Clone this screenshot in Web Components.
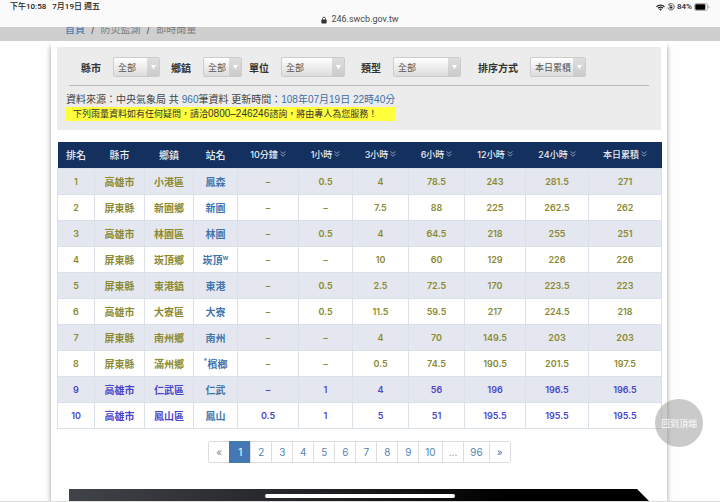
<!DOCTYPE html>
<html lang="zh-Hant">
<head>
<meta charset="utf-8">
<meta name="viewport" content="width=device-width, initial-scale=1">
<title>即時雨量</title>
<style>
  body {
    margin: 0;
    background: #fefefe;
    color: #444;
    font-family: Inter, "Noto Sans CJK TC", sans-serif;
    font-size: 9px;
    overflow: hidden;
  }
</style>
</head>
<body>
<rain-page>
  <status-bar slot="top" time="下午10:58" date="7月19日 週五" host="246.swcb.gov.tw" battery="84%"></status-bar>
  <bread-crumb slot="top" items="首頁,防災監測,即時雨量"></bread-crumb>

  <filter-panel>
    <filter-select slot="filters" label="縣市" value="全部" style="--select-width: 47px"></filter-select>
    <filter-select slot="filters" label="鄉鎮" value="全部" style="--select-width: 39px"></filter-select>
    <filter-select slot="filters" label="單位" value="全部" style="--select-width: 64px"></filter-select>
    <filter-select slot="filters" label="類型" value="全部" style="--select-width: 68px"></filter-select>
    <filter-select slot="filters" label="排序方式" value="本日累積" style="--select-width: 56px"></filter-select>
  </filter-panel>
  <rain-table></rain-table>
  <page-nav current="1" pages="1,2,3,4,5,6,7,8,9,10,...,96"></page-nav>
  <page-footer></page-footer>
</rain-page>
<back-to-top>回到頂端</back-to-top>
<home-indicator></home-indicator>

<script>
class RainPage extends HTMLElement {
  connectedCallback() {
    const shadow = this.attachShadow({ mode: 'open' });

    shadow.innerHTML = `
      <style>
        :host { display: block; }

        header {
          position: relative;
          z-index: 1;
        }

        .wrap {
          padding: 0 53px 0 51px;
          border-bottom: 1px solid #ddd;
          overflow: hidden;
        }

        main {
          display: flex;
          flex-direction: column;
          padding: 6px 6px 0;
          gap: 12px;
          background: #fff;
          box-shadow: 0 5px 5px rgba(0, 0, 0, 0.4);
        }
      </style>

      <header><slot name="top"></slot></header>
      <div class="wrap">
        <main><slot></slot></main>
      </div>
    `;
  }
}

class StatusBar extends HTMLElement {
  connectedCallback() {
    const shadow = this.attachShadow({ mode: 'open' });

    shadow.innerHTML = `
      <style>
        :host {
          display: block;
          background: #fafafa;
          color: #222;
          font-family: Roboto, "Noto Sans CJK TC", sans-serif;
          font-weight: 500;
        }

        .row {
          display: flex;
          align-items: center;
          height: 14px;
          padding: 0 10px;
          font-size: 8px;
          line-height: 14px;
        }

        .left { display: flex; gap: 6px; }

        .right {
          display: flex;
          align-items: center;
          gap: 2px;
          margin-left: auto;
        }

        .address {
          display: flex;
          align-items: center;
          justify-content: center;
          gap: 4px;
          height: 11px;
          padding-bottom: 2px;
          color: #4a4a4a;
          font-size: 9px;
          font-weight: 400;
          line-height: 11px;
        }

        svg { display: block; }
      </style>

      <div class="row">
        <div class="left">
          <span>${this.getAttribute('time')}</span>
          <span>${this.getAttribute('date')}</span>
        </div>
        <div class="right">
          <svg width="9" height="7" viewBox="0 0 18 14" fill="none" stroke="#222" stroke-width="2.6">
            <path d="M1 5.4a11.4 11.4 0 0 1 16 0M4 8.6a7.2 7.2 0 0 1 10 0"/>
            <path d="M9 13.4 6.2 10.6a4 4 0 0 1 5.6 0z" fill="#222" stroke="none"/>
          </svg>
          <svg width="8" height="8" viewBox="0 0 16 16" fill="none" stroke="#222" stroke-width="1.4">
            <path d="M3.4 3.2A6.4 6.4 0 1 1 1.7 8.8"/>
            <path d="M5 1.8 3 3.6l2.4 1.8"/>
            <path d="M6.2 7.6V6.4a1.8 1.8 0 0 1 3.6 0v1.2"/>
            <rect x="5.2" y="7.4" width="5.6" height="3.8" rx=".6" fill="#222" stroke="none"/>
          </svg>
          <span>${this.getAttribute('battery')}</span>
          <svg width="16" height="8" viewBox="0 0 32 16">
            <rect x="1" y="1" width="26" height="14" rx="4" fill="none" stroke="#999" stroke-width="1.6"/>
            <rect x="2.6" y="2.6" width="20" height="10.8" rx="2" fill="#000"/>
            <path d="M29 5.6q2 .8 2 2.4t-2 2.4z" fill="#999"/>
          </svg>
        </div>
      </div>
      <div class="address">
        <svg width="6" height="8" viewBox="0 0 12 16">
          <path d="M3 8V5.4a3 3 0 0 1 6 0V8" fill="none" stroke="#444" stroke-width="1.8"/>
          <rect x=".8" y="7" width="10.4" height="8" rx="1.4" fill="#333"/>
        </svg>
        <span>${this.getAttribute('host')}</span>
      </div>
    `;
  }
}

class BreadCrumb extends HTMLElement {
  connectedCallback() {
    const shadow = this.attachShadow({ mode: 'open' });
    const items = this.getAttribute('items').split(',');

    shadow.innerHTML = `
      <style>
        :host {
          display: block;
          height: 14px;
          overflow: hidden;
          background: #cfcfcf;
        }

        /* Scrolled halfway under the address bar */
        ol {
          display: flex;
          margin: -5px 0 0;
          padding: 0 65px;
          list-style: none;
          color: #7b7b7b;
          font-size: 10px;
          line-height: 14px;
        }

        li + li::before {
          content: "/";
          padding: 0 6px;
          color: #555;
        }

        a {
          color: #4a7fb5;
          font-weight: 500;
          text-decoration: none;
        }
      </style>

      <ol>
        ${items.map((item, i) => `<li>${i ? item : `<a href="#">${item}</a>`}</li>`).join('')}
      </ol>
    `;
  }
}

class FilterPanel extends HTMLElement {
  connectedCallback() {
    const shadow = this.attachShadow({ mode: 'open' });

    shadow.innerHTML = `
      <style>
        :host {
          display: block;
          padding: 10px 0 9px;
          background: #ececec;
        }

        .filters {
          display: grid;
          grid-template-columns: 90fr 78fr 112fr 117fr 183fr;
          padding-left: 24px;
        }

        hr {
          height: 1px;
          margin: 8px 12px 7px;
          border: 0;
          background: #b9b9b9;
        }

        p {
          display: flex;
          margin: 0 9px;
          font-family: "Liberation Sans", "Noto Sans CJK TC", sans-serif;
          font-size: 10px;
          line-height: 14px;
          white-space: pre;
        }

        .source { margin-right: 3px; }

        b {
          color: #3d6ea8;
          font-weight: 400;
        }

        mark {
          padding: 0 18px 0 7px;
          background: #ffff3c;
          color: #333;
          font-size: 9px;
          line-height: 13px;
        }

        .phone { font-size: 10px; }
      </style>

      <div class="filters"><slot name="filters"></slot></div>
      <hr>
      <p><span class="source">資料來源：中央氣象局 共</span><span><b>960</b>筆資料 更新時間：</span><b>108年07月19日 22時40分</b></p>
      <p><mark>下列雨量資料如有任何疑問，請洽<span class="phone">0800–246246</span>諮詢，將由專人為您服務！</mark></p>
    `;
  }
}

class FilterSelect extends HTMLElement {
  connectedCallback() {
    const shadow = this.attachShadow({ mode: 'open' });

    shadow.innerHTML = `
      <style>
        :host {
          display: flex;
          align-items: center;
          gap: 12px;
        }

        label {
          color: #333;
          font-size: 10px;
          font-weight: 700;
          white-space: nowrap;
        }

        .box {
          position: relative;
          width: var(--select-width);
        }

        select {
          display: block;
          box-sizing: border-box;
          width: 100%;
          height: 20px;
          padding: 0 13px 0 4px;
          appearance: none;
          border: 1px solid #ccc;
          border-radius: 2px;
          background: linear-gradient(#fff, #dcdcdc);
          color: #555;
          font: inherit;
        }

        .arrow {
          position: absolute;
          inset: 1px 1px 1px auto;
          display: grid;
          place-items: center;
          width: 12px;
          background: linear-gradient(#dedede, #cbcbcb);
          pointer-events: none;
        }
      </style>

      <label for="field">${this.getAttribute('label')}</label>
      <div class="box">
        <select id="field"><option>${this.getAttribute('value')}</option></select>
        <span class="arrow">
          <svg width="5" height="5" viewBox="0 0 6 6"><path d="M0 0h6L3 5z" fill="#fff"/></svg>
        </span>
      </div>
    `;
  }
}

class SortButton extends HTMLElement {
  connectedCallback() {
    const shadow = this.attachShadow({ mode: 'open' });

    shadow.innerHTML = `
      <style>
        :host { display: inline-block; }

        button {
          display: flex;
          align-items: center;
          gap: 2px;
          padding: 0;
          border: 0;
          background: none;
          color: inherit;
          font: inherit;
          line-height: inherit;
          white-space: nowrap;
        }

        svg { margin-bottom: 2px; }
      </style>

      <button type="button">
        <slot></slot>
        <svg width="6" height="6" viewBox="0 0 12 12" fill="none" stroke="#a9b8d2" stroke-width="1.5">
          <path d="M1 1l5 4 5-4M1 6.4l5 4 5-4"/>
        </svg>
      </button>
    `;
  }
}

const WIDTHS = [37, 50, 49, 44, 61, 54, 56, 56, 61, 63, 73];
const TEXT_HEADS = ['排名', '縣市', '鄉鎮', '站名'];
const SORT_HEADS = ['10分鐘', '1小時', '3小時', '6小時', '12小時', '24小時', '本日累積'];

const ROWS = [
  ['高雄市', '小港區', '鳳森', '–', '0.5', '4', '78.5', '243', '281.5', '271'],
  ['屏東縣', '新園鄉', '新園', '–', '–', '7.5', '88', '225', '262.5', '262'],
  ['高雄市', '林園區', '林園', '–', '0.5', '4', '64.5', '218', '255', '251'],
  ['屏東縣', '崁頂鄉', '崁頂<sup>w</sup>', '–', '–', '10', '60', '129', '226', '226'],
  ['屏東縣', '東港鎮', '東港', '–', '0.5', '2.5', '72.5', '170', '223.5', '223'],
  ['高雄市', '大寮區', '大寮', '–', '0.5', '11.5', '59.5', '217', '224.5', '218'],
  ['屏東縣', '南州鄉', '南州', '–', '–', '4', '70', '149.5', '203', '203'],
  ['屏東縣', '滿州鄉', '<sup>*</sup>檳榔', '–', '–', '0.5', '74.5', '190.5', '201.5', '197.5'],
  ['高雄市', '仁武區', '仁武', '–', '1', '4', '56', '196', '196.5', '196.5'],
  ['高雄市', '鳳山區', '鳳山', '0.5', '1', '5', '51', '195.5', '195.5', '195.5']
];

class RainTable extends HTMLElement {
  connectedCallback() {
    const shadow = this.attachShadow({ mode: 'open' });

    shadow.innerHTML = `
      <style>
        :host { display: block; }

        table {
          width: 100%;
          table-layout: fixed;
          border-collapse: collapse;
          text-align: center;
          line-height: 14px;
        }

        th, td {
          height: 25px;
          padding: 0;
          vertical-align: middle;
        }

        th {
          height: 26px;
          background: #14305f;
          color: #e6ebf3;
          font-size: 9px;
          font-weight: 500;
        }

        th sort-button { vertical-align: middle; }

        td {
          border: 1px solid #dbe1e8;
          color: #8b8a32;
          font-size: 9px;
          font-weight: 600;
        }

        tr:nth-child(odd) td { background: #e4e7ef; }
        tr.low td { color: #4b46cb; }

        .name { font-size: 10px; }

        td a {
          color: #3f76ae;
          text-decoration: none;
        }

        sup {
          font-size: 7px;
          line-height: 0;
        }
      </style>

      <table>
        <colgroup>${WIDTHS.map(w => `<col style="width: ${w}px">`).join('')}</colgroup>
        <thead>
          <tr>
            ${TEXT_HEADS.map(h => `<th class="name">${h}</th>`).join('')}
            ${SORT_HEADS.map(h => `<th><sort-button>${h}</sort-button></th>`).join('')}
          </tr>
        </thead>
        <tbody>
          ${ROWS.map((row, i) => this.row(row, i + 1)).join('')}
        </tbody>
      </table>
    `;
  }

  row([county, town, station, ...values], rank) {
    return `
      <tr class="${rank > 8 ? 'low' : ''}">
        <td>${rank}</td>
        <td class="name">${county}</td>
        <td class="name">${town}</td>
        <td class="name"><a href="#">${station}</a></td>
        ${values.map(v => `<td>${v}</td>`).join('')}
      </tr>
    `;
  }
}

class PageNav extends HTMLElement {
  connectedCallback() {
    const shadow = this.attachShadow({ mode: 'open' });
    const current = this.getAttribute('current');
    const pages = this.getAttribute('pages').split(',');

    shadow.innerHTML = `
      <style>
        :host { display: block; }

        nav {
          display: flex;
          justify-content: center;
          font-size: 10px;
          line-height: 20px;
        }

        a, span {
          box-sizing: border-box;
          min-width: 22px;
          margin-right: -1px;
          padding: 0 6px;
          border: 1px solid #ddd;
          color: #5583b0;
          text-align: center;
          text-decoration: none;
        }

        span { color: #888; }
        :first-child { border-radius: 2px 0 0 2px; }
        :last-child { border-radius: 0 2px 2px 0; }

        .current {
          border-color: #4478b2;
          background: #4478b2;
          color: #fff;
        }
      </style>

      <nav><span>«</span>${pages.map(p => {
        if (p === current) return `<a class="current" href="#">${p}</a>`;
        return p === '...' ? `<span>${p}</span>` : `<a href="#">${p}</a>`;
      }).join('')}<a href="#">»</a></nav>
    `;
  }
}

class PageFooter extends HTMLElement {
  connectedCallback() {
    const shadow = this.attachShadow({ mode: 'open' });

    shadow.innerHTML = `
      <style>
        :host {
          display: block;
          height: 12px;
          margin: 14px 12px 0;
          background: linear-gradient(90deg, #404348, #1c1c1f 50%, #000 75%);
          clip-path: polygon(0 0, calc(100% - 12px) 0, 100% 100%, 0 100%);
        }
      </style>
    `;
  }
}

class BackToTop extends HTMLElement {
  connectedCallback() {
    const shadow = this.attachShadow({ mode: 'open' });

    shadow.innerHTML = `
      <style>
        :host {
          position: fixed;
          right: 17px;
          bottom: 55px;
          z-index: 2;
        }

        button {
          width: 48px;
          height: 48px;
          padding: 0;
          border: 0;
          border-radius: 50%;
          background: rgba(150, 150, 150, 0.5);
          color: #fff;
          font: inherit;
          white-space: nowrap;
        }
      </style>

      <button type="button"><slot></slot></button>
    `;
    shadow.querySelector('button').addEventListener('click', () => window.scrollTo(0, 0));
  }
}

class HomeIndicator extends HTMLElement {
  connectedCallback() {
    const shadow = this.attachShadow({ mode: 'open' });

    shadow.innerHTML = `
      <style>
        :host {
          position: fixed;
          inset: auto 0 4px;
          z-index: 3;
          display: flex;
          justify-content: center;
          pointer-events: none;
        }

        div {
          width: 190px;
          height: 4px;
          border-radius: 2px;
          background: #fff;
        }
      </style>

      <div></div>
    `;
  }
}

customElements.define('rain-page', RainPage);
customElements.define('status-bar', StatusBar);
customElements.define('bread-crumb', BreadCrumb);
customElements.define('filter-panel', FilterPanel);
customElements.define('filter-select', FilterSelect);
customElements.define('sort-button', SortButton);
customElements.define('rain-table', RainTable);
customElements.define('page-nav', PageNav);
customElements.define('page-footer', PageFooter);
customElements.define('back-to-top', BackToTop);
customElements.define('home-indicator', HomeIndicator);
</script>
</body>
</html>
